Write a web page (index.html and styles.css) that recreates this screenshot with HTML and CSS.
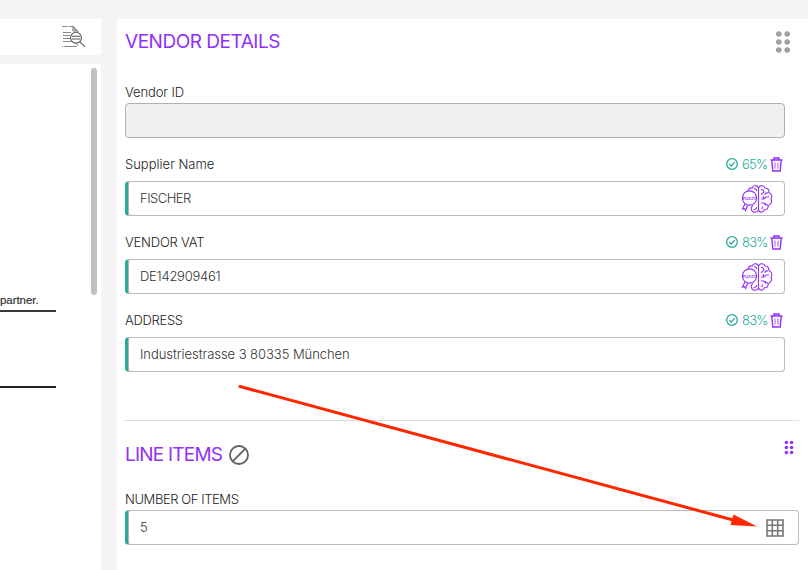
FILE: index.html
```
<!DOCTYPE html>
<html lang="en">
<head>
<meta charset="utf-8">
<title>Vendor details</title>
<link rel="stylesheet" href="styles.css">
</head>
<body>
<svg class="defs" aria-hidden="true">
  <symbol id="check" viewBox="0 0 12 12"><circle cx="6" cy="6" r="5.3"/><path d="M3.3 6.2 5.2 8 8.9 4.1"/></symbol>
  <symbol id="trash" viewBox="0 0 13 15"><path d="M.5 3h12M4 2.7V1h5v1.7M1.8 3.2l1 10.8h7.4l1-10.8"/><path class="thin" d="M5 5.5v6.2M8 5.5v6.2"/></symbol>
  <symbol id="brain" viewBox="0 0 32 30">
    <path d="M17.5 3v24M17.5 4C16 .8 12 1 11.2 4 9.5 3.5 7.8 4.5 7.2 6.5M17.5 26c-1.2 3.2-6 3-7-.2-.6-2 .2-3.5 1.7-4M13 4.5c1.8 0 2.6 1 2.5 2.6M12.6 25.5c1.8.2 3-.8 3-2.6"/>
    <path d="M17.5 4C19 .8 23 1 24 4c2.4-.1 4.3 1.8 3.8 4.5 2.8 1 3.8 4 2.2 6.3 1.4 3-.1 6-2.8 6.7.2 2.8-1.5 4.500-4 4.300-.8 3-4.500 3.200-5.700.2M20 5.500c2 0 3 .8 3 2.500l-3 2.800M27 9c-1.600-.4-2.800.2-3.200 1.800M20 15h3l2-2h3M22 12l1 3M20 19h3l1.500 2.300M27 21c-1.600.2-2.500-.4-3-1.800M21 25.200l.5-2.500"/>
    <circle cx="8.5" cy="14" r="7.1"/><path d="m4 20-2.6 5 2.2-.4 1 2 2-5.3"/>
  </symbol>
  <symbol id="dots" viewBox="0 0 16 24"><circle cx="3.8" cy="4" r="2.8"/><circle cx="12.2" cy="4" r="2.8"/><circle cx="3.8" cy="12" r="2.8"/><circle cx="12.2" cy="12" r="2.8"/><circle cx="3.8" cy="20" r="2.8"/><circle cx="12.2" cy="20" r="2.8"/></symbol>
</svg>
<div class="app">
  <aside class="document">
    <div class="toolbar">
      <svg class="search-doc" viewBox="0 0 24 24"><path class="faint" d="M1 1.5h6M8 1.5h4M2 7.500h8M2 10.500h7M2 13.500h7M2 16.500h8M3 21.500h12M1 21.500h1M16 19v2.500"/><path class="fold" d="M12 1.500v4.500h4.500zM13 2l4 5"/><circle cx="15" cy="12.7" r="5.4"/><path d="M11 11.200h8M11 14h8M18.800 16.800l5 4.800"/></svg>
    </div>
    <div class="page">
      <div class="sheet"><p class="snippet">partner.</p><div class="rule"></div><div class="rule second"></div></div>
      <div class="scrollbar"></div>
    </div>
  </aside>
  <main class="panel">
    <section class="vendor">
      <header class="head"><h2 class="t-vendor">VENDOR DETAILS</h2><svg class="dots-big"><use href="#dots"/></svg></header>
      <div class="field first"><div class="label"><span class="t-id">Vendor ID</span></div><div class="input disabled"></div></div>
      <div class="field"><div class="label"><span class="t-supplier">Supplier Name</span><div class="score"><svg class="check"><use href="#check"/></svg><span>65%</span><svg class="trash"><use href="#trash"/></svg></div></div><div class="input marked"><span class="t-fischer">FISCHER</span><svg class="brain" viewBox="0 0 32 30"><use href="#brain"/><text x="8.5" y="15.5">FUZZY</text></svg></div></div>
      <div class="field"><div class="label"><span class="t-vat">VENDOR VAT</span><div class="score"><svg class="check"><use href="#check"/></svg><span>83%</span><svg class="trash"><use href="#trash"/></svg></div></div><div class="input marked"><span class="t-number">DE142909461</span><svg class="brain" viewBox="0 0 32 30"><use href="#brain"/><text x="8.5" y="15.5">FUZZY</text></svg></div></div>
      <div class="field"><div class="label"><span class="t-address">ADDRESS</span><div class="score"><svg class="check"><use href="#check"/></svg><span>83%</span><svg class="trash"><use href="#trash"/></svg></div></div><div class="input marked"><span class="t-street">Industriestrasse 3 80335 München</span></div></div>
    </section>
    <section class="items">
      <header class="items-head"><h2 class="t-items">LINE ITEMS</h2><svg class="ban" viewBox="0 0 20 20"><circle cx="10" cy="10" r="9"/><path d="M3.7 16.3 16.3 3.7"/></svg><svg class="dots-small"><use href="#dots"/></svg></header>
      <div class="label"><span class="t-count">NUMBER OF ITEMS</span></div>
      <div class="input marked"><span>5</span><svg class="grid" viewBox="0 0 18 18"><path d="M1 1h16v16H1zM6.3 1v16M11.7 1v16M1 6.3h16M1 11.7h16"/></svg></div>
    </section>
  </main>
</div>
<svg class="arrow" viewBox="0 0 808 570"><path d="M240 386.5 735 520.5"/><polygon points="757,526.5 730.5,525 733.5,514.5"/></svg>
</body>
</html>
```
FILE: styles.css
```
* { box-sizing: border-box; }
body { margin: 0; width: 808px; height: 570px; overflow: hidden; background: #f4f4f4; font: 300 13px/20px Inter, Roboto, sans-serif; color: #222; }
svg { display: block; flex: none; fill: none; stroke: currentColor; }
.defs { position: absolute; width: 0; height: 0; }
.app { display: flex; gap: 16px; height: 570px; padding-top: 19px; }
.document { width: 101px; display: flex; flex-direction: column; gap: 9px; }
.toolbar { height: 36px; background: #fff; display: flex; align-items: center; justify-content: flex-end; padding-right: 16px; }
.search-doc { width: 24px; height: 24px; color: #555; stroke-width: 1.1; }
.faint { stroke: #888; }
.fold { fill: #bbb; stroke: #888; }
.page { flex: 1; background: #fff; display: flex; justify-content: space-between; padding: 4px 4px 0 0; }
.sheet { width: 56px; padding-top: 223px; }
.snippet { margin: 0; font: 400 11.5px/18px "Liberation Sans", sans-serif; color: #333; -webkit-text-stroke: .2px #333; height: 18.5px; letter-spacing: -.05px; }
.rule { height: 2px; background: #39393d; }
.rule.second { margin-top: 74px; background: #222; }
.scrollbar { width: 6px; height: 227px; border-radius: 3px; background: #c1c1c1; }
.panel { flex: 1; background: #fff; padding-left: 8px; }
.vendor { width: 674px; height: 402px; border-bottom: 1px solid #ddd; }
.head { display: flex; justify-content: space-between; align-items: center; height: 45px; padding-right: 8px; }
h2 { margin: 0; font: 400 19px/24px Inter, Roboto, sans-serif; color: #9130f8; white-space: nowrap; }
.t-vendor { letter-spacing: -.48px; padding-top: 1px; }
.t-items { letter-spacing: -.78px; padding-top: 1px; }
.t-vat { letter-spacing: -.2px; }
.t-address { letter-spacing: -.3px; }
.t-count { letter-spacing: -.42px; }
.t-fischer { letter-spacing: -.5px; }
.t-number { letter-spacing: -.25px; }
.t-street { letter-spacing: -.05px; }
.t-id { letter-spacing: -.1px; }
.dots-big { width: 16px; height: 24px; fill: #a0a0a0; stroke: none; }
.field { width: 660px; height: 78px; }
.field.first { height: 74px; padding-top: 17px; }
.label { display: flex; justify-content: space-between; align-items: center; height: 43px; padding-top: 9px; white-space: nowrap; }
.first .label, .items .label { height: 22px; padding: 0 0 1px; }
.input { height: 35px; border: 1px solid #bbb; border-radius: 4px; display: flex; align-items: center; justify-content: space-between; padding: 0 11px; color: #333; }
.input > span { padding-bottom: 1px; }
.disabled { background: #f0f0f0; border-color: #b0b0b0; }
.marked { border-left: 3px solid #2aa89a; box-shadow: inset 1px 0 #aab8b6; padding-left: 12px; }
.score { display: flex; align-items: center; gap: 4px; color: #2aa99b; padding-right: 2px; }
.score span { width: 24px; letter-spacing: -.8px; }
.check { width: 12px; height: 12px; stroke-width: 1.3; }
.trash { width: 13px; height: 15px; color: #9130f8; stroke-width: 1.4; }
.thin { stroke-width: .8; }
.brain { width: 32px; height: 30px; color: #9130f8; stroke-width: 1.1; }
.brain text { font: 700 4.2px "Liberation Sans", sans-serif; fill: #9130f8; stroke: none; text-anchor: middle; }
.items { width: 674px; }
.items-head { height: 67px; display: flex; align-items: center; padding-bottom: 1px; }
.ban { width: 20px; height: 20px; margin: 2px 0 0 7px; color: #606060; stroke-width: 1.8; }
.dots-small { width: 10px; height: 15px; margin: -14px 5px 0 auto; color: #9130f8; fill: #9130f8; stroke: none; }
.grid { width: 18px; height: 18px; margin-right: 3px; color: #777; stroke-width: 1.6; }
.arrow { position: absolute; inset: 0; width: 808px; height: 570px; color: #ff2600; stroke-width: 3; stroke-linecap: round; pointer-events: none; }
.arrow polygon { fill: #ff2600; stroke: none; }
```
